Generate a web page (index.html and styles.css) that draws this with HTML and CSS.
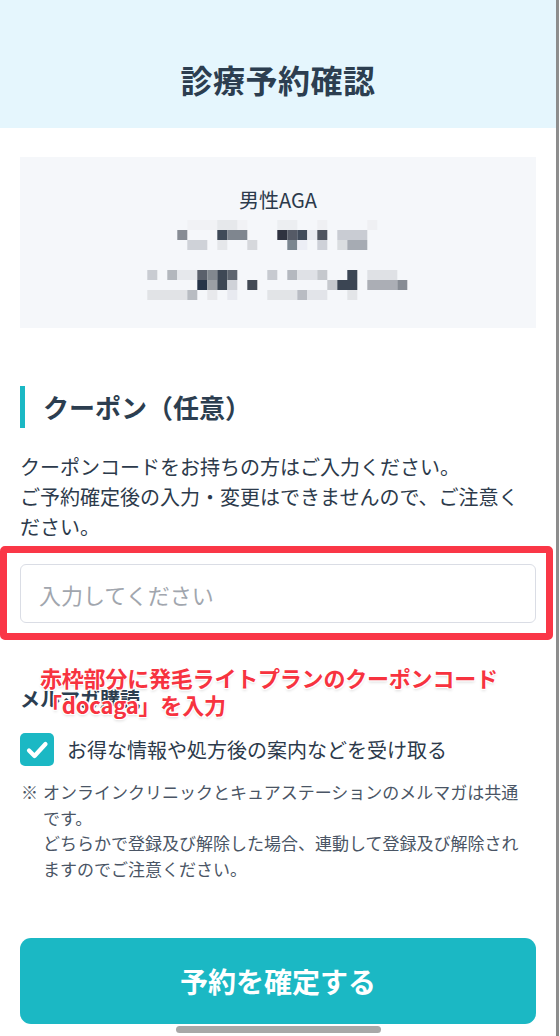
FILE: index.html
```html
<!DOCTYPE html>
<html lang="ja">
<head>
    <meta charset="UTF-8">
    <meta name="viewport" content="width=device-width, initial-scale=1.0">
    <title>診療予約確認</title>
    <link rel="stylesheet" href="styles.css">
</head>
<body>
    <div class="page">
        <header class="page-header">
            <h1>診療予約確認</h1>
        </header>

        <div class="content">
            <div class="plan-box">
                <p class="plan-name">男性AGA</p>
                <svg class="mosaic" width="280" height="80" viewBox="0 20 280 80">
                    <rect x="49.3" y="20" width="60" height="10" fill="#f1f2f5"/>
                    <rect x="79.3" y="20" width="20" height="10" fill="#e6e8eb"/>
                    <rect x="139.3" y="20" width="20" height="10" fill="#eceef1"/>
                    <rect x="179.3" y="20" width="10" height="10" fill="#eff0f3"/>
                    <rect x="229.3" y="20" width="10" height="10" fill="#eff0f3"/>
                    <rect x="39.3" y="30" width="10" height="10" fill="#878c94"/>
                    <rect x="79.3" y="30" width="10" height="10" fill="#3f4a58"/>
                    <rect x="89.3" y="30" width="20" height="10" fill="#7f868f"/>
                    <rect x="139.3" y="30" width="10" height="10" fill="#2f3340"/>
                    <rect x="149.3" y="30" width="10" height="10" fill="#555a66"/>
                    <rect x="159.3" y="30" width="10" height="10" fill="#414b5a"/>
                    <rect x="169.3" y="30" width="10" height="10" fill="#e8eaf0"/>
                    <rect x="179.3" y="30" width="10" height="10" fill="#505560"/>
                    <rect x="199.3" y="30" width="30" height="10" fill="#c9ccd3"/>
                    <rect x="49.3" y="40" width="20" height="10" fill="#cfd2d8"/>
                    <rect x="79.3" y="40" width="10" height="10" fill="#e5e7ea"/>
                    <rect x="109.3" y="40" width="10" height="10" fill="#d6d8dc"/>
                    <rect x="149.3" y="40" width="10" height="10" fill="#7b8690"/>
                    <rect x="159.3" y="40" width="10" height="10" fill="#eceef5"/>
                    <rect x="179.3" y="40" width="10" height="10" fill="#ced1d8"/>
                    <rect x="199.3" y="40" width="10" height="10" fill="#dadde0"/>
                    <rect x="209.3" y="40" width="20" height="10" fill="#a6abb3"/>

                    <rect x="9.3" y="70" width="10" height="10" fill="#c9ccd2"/>
                    <rect x="29.3" y="70" width="10" height="10" fill="#b3b7bd"/>
                    <rect x="39.3" y="70" width="20" height="10" fill="#e6e8ec"/>
                    <rect x="59.3" y="70" width="10" height="10" fill="#5a606b"/>
                    <rect x="69.3" y="70" width="10" height="10" fill="#82888f"/>
                    <rect x="79.3" y="70" width="10" height="10" fill="#3e4855"/>
                    <rect x="89.3" y="70" width="10" height="10" fill="#5e656f"/>
                    <rect x="129.3" y="70" width="10" height="10" fill="#c7cad0"/>
                    <rect x="149.3" y="70" width="10" height="10" fill="#b4b8bf"/>
                    <rect x="159.3" y="70" width="20" height="10" fill="#dfe1e6"/>
                    <rect x="179.3" y="70" width="10" height="10" fill="#c5c8cd"/>
                    <rect x="209.3" y="70" width="10" height="10" fill="#3b4654"/>
                    <rect x="229.3" y="70" width="30" height="10" fill="#dfe1e5"/>
                    <rect x="59.3" y="80" width="10" height="10" fill="#263448"/>
                    <rect x="69.3" y="80" width="10" height="10" fill="#9b9fa5"/>
                    <rect x="79.3" y="80" width="10" height="10" fill="#3d4754"/>
                    <rect x="89.3" y="80" width="10" height="10" fill="#cfd2d8"/>
                    <rect x="109.3" y="80" width="10" height="10" fill="#434a55"/>
                    <rect x="189.3" y="80" width="10" height="10" fill="#c6c9ce"/>
                    <rect x="199.3" y="80" width="20" height="10" fill="#3b4553"/>
                    <rect x="229.3" y="80" width="30" height="10" fill="#abaeb5"/>
                    <rect x="259.3" y="80" width="10" height="10" fill="#878c94"/>
                    <rect x="9.3" y="90" width="40" height="10" fill="#e1e3e6"/>
                    <rect x="49.3" y="90" width="10" height="10" fill="#b8bcc2"/>
                    <rect x="69.3" y="90" width="10" height="10" fill="#e8e9ec"/>
                    <rect x="89.3" y="90" width="10" height="10" fill="#e8eaf0"/>
                    <rect x="129.3" y="90" width="30" height="10" fill="#e2e4e7"/>
                    <rect x="159.3" y="90" width="10" height="10" fill="#b9bcc3"/>
                    <rect x="169.3" y="90" width="20" height="10" fill="#e2e4e9"/>
                    <rect x="209.3" y="90" width="10" height="10" fill="#e3e5e8"/>
                </svg>
            </div>

            <h2 class="section-title">クーポン（任意）</h2>
            <p class="coupon-text">クーポンコードをお持ちの方はご入力ください。<br>ご予約確定後の入力・変更はできませんので、ご注意ください。</p>

            <div class="coupon-field">
                <input type="text" class="coupon-input" placeholder="入力してください">
                <div class="red-frame"></div>
            </div>

            <div class="newsletter">
                <h3 class="newsletter-title">メルマガ購読</h3>
                <p class="annotation">赤枠部分に発毛ライトプランのクーポンコード<br>「docaga」を入力</p>

                <label class="check-row">
                    <span class="checkbox">
                        <svg width="34" height="33" viewBox="0 0 34 33"><path d="M9 17.5 L14.5 23 L25.5 11" fill="none" stroke="#fff" stroke-width="4.2" stroke-linecap="round" stroke-linejoin="round"/></svg>
                    </span>
                    <span class="check-label">お得な情報や処方後の案内などを受け取る</span>
                </label>

                <div class="note">
                    <span class="note-mark">※</span>
                    <p class="note-text">オンラインクリニックとキュアステーションのメルマガは共通です。<br>どちらかで登録及び解除した場合、連動して登録及び解除されますのでご注意ください。</p>
                </div>
            </div>

            <button type="button" class="submit-btn">予約を確定する</button>
            <div class="home-bar"></div>
        </div>
    </div>
</body>
</html>
```

FILE: styles.css
```css
* { margin: 0; padding: 0; box-sizing: border-box; }
body { font-family: "Noto Sans CJK JP", "Noto Sans", sans-serif; color: #2c3a4b; background: #fff; }
.page { width: 559px; min-height: 1036px; border-right: 3px solid #8d8d8d; }
.page-header { height: 128px; padding-top: 30px; background-color: #e5f6fd; display: flex; align-items: center; justify-content: center; }
.page-header h1 { font-size: 32px; font-weight: 700; color: #2c3e50; letter-spacing: 0.5px; }
.content { padding: 0 20px; }

.plan-box { margin-top: 29px; height: 171px; background-color: #f5f7fa; padding-top: 29px; display: flex; flex-direction: column; align-items: center; }
.plan-name { font-size: 20px; line-height: 28px; color: #2c3a4b; }
.mosaic { display: block; margin-top: 6px; }

.section-title { margin-top: 58px; height: 42px; line-height: 42px; border-left: 5px solid #1bb8c4; padding-left: 18px; font-size: 26px; font-weight: 700; color: #2c3e50; }
.coupon-text { margin-top: 24px; font-size: 20px; line-height: 30px; color: #2c3a4b; }

.coupon-field { position: relative; margin-top: 22px; }
.coupon-input { display: block; width: 100%; height: 59px; border: 1.5px solid #dadde5; border-radius: 6px; padding: 0 18px; font-family: inherit; font-size: 22px; color: #2c3a4b; background: #fff; outline: none; }
.coupon-input::placeholder { color: #a1a6ae; }
.red-frame { position: absolute; left: -20px; right: -17px; top: -18px; bottom: -17px; border: 7px solid #fa3747; border-radius: 5px; pointer-events: none; }

.newsletter { position: relative; margin-top: 61px; }
.newsletter-title { font-size: 20px; line-height: 30px; font-weight: 700; color: #2c3e50; }
.annotation { position: absolute; left: 20px; top: -20px; font-size: 22px; line-height: 27px; font-weight: 700; color: #f7333f; letter-spacing: -0.2px;
    text-shadow: 0 0 2px #fff, 1px 1px 0 #fff, -1px -1px 0 #fff, 1px -1px 0 #fff, -1px 1px 0 #fff, 0 2px 3px rgba(0,0,0,0.15); }

.check-row { display: flex; align-items: center; margin-top: 19px; }
.checkbox { width: 34px; height: 33px; border-radius: 5px; background-color: #1bb8c4; display: flex; }
.check-label { margin-left: 13px; font-size: 20px; line-height: 30px; color: #2c3a4b; }

.note { display: flex; margin-top: 13px; font-size: 17px; line-height: 25.5px; color: #4a5565; }
.note-mark { width: 23px; flex-shrink: 0; padding-left: 1px; }
.note-text { width: 485px; }

.submit-btn { display: block; width: 100%; height: 86px; margin-top: 57px; border: none; border-radius: 11px; background-color: #1bb8c4; color: #fff; font-family: inherit; font-size: 28px; font-weight: 700; cursor: pointer; }
.home-bar { width: 205px; height: 7px; margin: 2px auto 0; border-radius: 4px; background-color: #a8a8a8; }
```
